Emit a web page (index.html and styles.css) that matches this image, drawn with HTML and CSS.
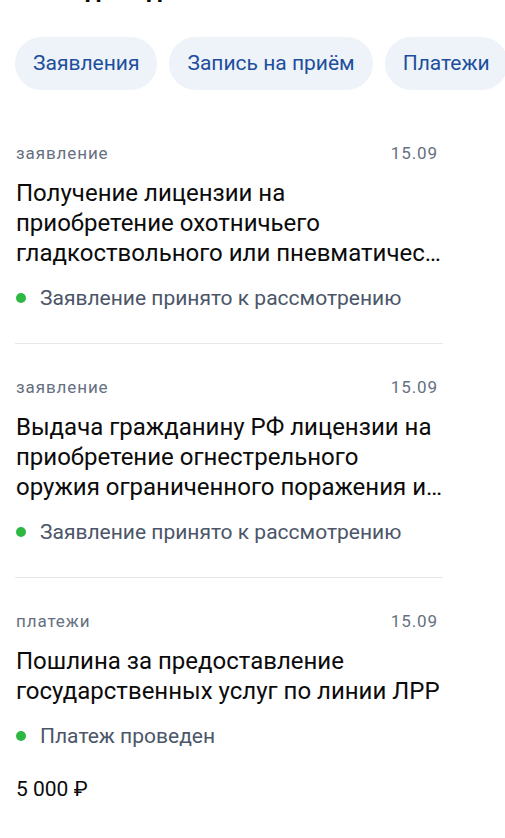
FILE: index.html
```html
<!DOCTYPE html>
<html lang="ru">
<head>
    <meta charset="utf-8"/>
    <meta content="width=device-width, initial-scale=1.0" name="viewport"/>
    <title>Лента</title>
    <link rel="stylesheet" href="styles.css">
</head>
<body>
    <div class="page">
        <h2 class="title">Последние дела</h2>
        <div class="chips">
            <div class="chip">Заявления</div>
            <div class="chip">Запись на приём</div>
            <div class="chip">Платежи</div>
        </div>
        <div class="feed">
            <div class="item">
                <div class="meta">
                    <span class="kind">заявление</span>
                    <span class="date">15.09</span>
                </div>
                <div class="name">Получение лицензии на приобретение охотничьего гладкоствольного или пневматичес…</div>
                <div class="status"><span class="dot"></span>Заявление принято к рассмотрению</div>
            </div>
            <div class="item">
                <div class="meta">
                    <span class="kind">заявление</span>
                    <span class="date">15.09</span>
                </div>
                <div class="name">Выдача гражданину РФ лицензии на приобретение огнестрельного оружия ограниченного поражения и…</div>
                <div class="status"><span class="dot"></span>Заявление принято к рассмотрению</div>
            </div>
            <div class="item">
                <div class="meta">
                    <span class="kind">платежи</span>
                    <span class="date">15.09</span>
                </div>
                <div class="name">Пошлина за предоставление государственных услуг по линии ЛРР</div>
                <div class="status"><span class="dot"></span>Платеж проведен</div>
                <div class="sum">5 000 ₽</div>
            </div>
        </div>
    </div>
</body>
</html>
```

FILE: styles.css
```css
body {
    font-family: Roboto, "Noto Sans", sans-serif;
    margin: 0;
    padding: 0;
    background-color: #fff;
    color: #0b0b0b;
    overflow: hidden;
}
.page {
    padding: 0 0 0 15px;
}
.title {
    font-size: 24px;
    font-weight: 700;
    line-height: 32px;
    margin: -26px 0 31px 1px;
    white-space: nowrap;
}
.chips {
    display: flex;
    gap: 12px;
    white-space: nowrap;
}
.chip {
    background-color: #eef3f9;
    color: #1d4f9c;
    border-radius: 27px;
    height: 53px;
    line-height: 53px;
    padding: 0 18px;
    font-size: 21px;
    flex-shrink: 0;
}
.feed {
    width: 428px;
    margin-top: 20px;
}
.item {
    padding: 33px 0 33px;
    border-bottom: 1px solid #e6e8ec;
}
.item:last-child {
    border-bottom: none;
}
.meta {
    display: flex;
    justify-content: space-between;
    color: #66707f;
    font-size: 17px;
    line-height: 20px;
    letter-spacing: 0.9px;
    padding: 0 5px 0 1px;
}
.name {
    margin-top: 15px;
    font-size: 24px;
    line-height: 30px;
    padding-left: 1px;
}
.status {
    margin-top: 18px;
    display: flex;
    align-items: center;
    color: #4b5668;
    font-size: 21px;
    line-height: 24px;
}
.dot {
    width: 10px;
    height: 10px;
    border-radius: 50%;
    background-color: #2eb843;
    margin: 0 14px 0 1px;
}
.sum {
    margin-top: 29px;
    font-size: 21px;
    line-height: 24px;
    padding-left: 1px;
}
```
